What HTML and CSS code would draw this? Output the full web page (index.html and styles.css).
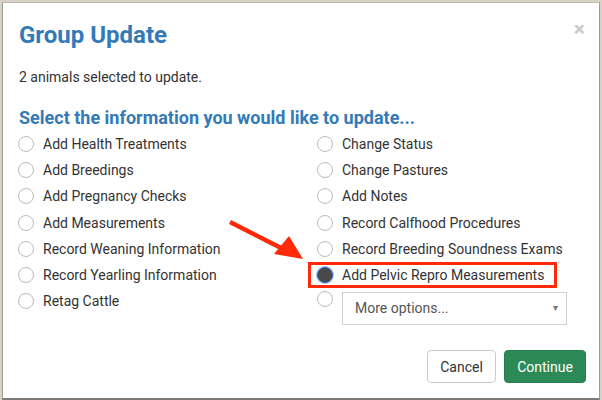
FILE: index.html
```html
<!DOCTYPE html>
<html>
<head>
<meta charset="utf-8">
<link rel="stylesheet" href="styles.css">
</head>
<body>
<div class="modal">
  <div class="modal-header">
    <h4 class="modal-title">Group Update</h4>
    <span class="close">×</span>
  </div>
  <p class="intro">2 animals selected to update.</p>
  <h5 class="section-title">Select the information you would like to update...</h5>
  <div class="options">
    <div class="col">
      <label class="opt"><span class="radio"></span>Add Health Treatments</label>
      <label class="opt"><span class="radio"></span>Add Breedings</label>
      <label class="opt"><span class="radio"></span>Add Pregnancy Checks</label>
      <label class="opt"><span class="radio"></span>Add Measurements</label>
      <label class="opt"><span class="radio"></span>Record Weaning Information</label>
      <label class="opt"><span class="radio"></span>Record Yearling Information</label>
      <label class="opt"><span class="radio"></span>Retag Cattle</label>
    </div>
    <div class="col">
      <label class="opt"><span class="radio"></span>Change Status</label>
      <label class="opt"><span class="radio"></span>Change Pastures</label>
      <label class="opt"><span class="radio"></span>Add Notes</label>
      <label class="opt"><span class="radio"></span>Record Calfhood Procedures</label>
      <label class="opt"><span class="radio"></span>Record Breeding Soundness Exams</label>
      <label class="opt selected"><span class="radio checked"></span>Add Pelvic Repro Measurements<span class="highlight"></span></label>
      <div class="opt opt-select"><span class="radio"></span>
        <div class="select"><span>More options...</span><span class="caret">▾</span></div>
      </div>
    </div>
  </div>
  <div class="modal-footer">
    <button class="btn btn-default">Cancel</button>
    <button class="btn btn-success">Continue</button>
  </div>
</div>
<svg class="arrow" width="602" height="400" viewBox="0 0 602 400">
  <line x1="230" y1="222" x2="285" y2="250" stroke="#ff2a0a" stroke-width="4.5" stroke-linecap="butt"/>
  <polygon points="274,254 289,236 303,259" fill="#ff2a0a"/>
</svg>
</body>
</html>
```
FILE: styles.css
```css
html, body {
  margin: 0;
  padding: 0;
}
body {
  width: 602px;
  height: 400px;
  box-sizing: border-box;
  padding: 2px 2px 0 2px;
  background: #d8d1c6;
  font-family: Roboto, "Liberation Sans", sans-serif;
  color: #333;
  position: relative;
  overflow: hidden;
}
.modal {
  box-sizing: border-box;
  height: 398px;
  background: #fff;
  border-top: 1px solid #bfb8ad;
  border-left: 1px solid #a19b92;
  border-right: 1px solid #a19b92;
  border-bottom: 2px solid #7e7974;
  display: flex;
  flex-direction: column;
}
.modal-header {
  display: flex;
  justify-content: space-between;
  align-items: flex-start;
  padding: 19px 14px 0 16px;
}
.modal-title {
  margin: 0;
  font-size: 24px;
  line-height: 26px;
  font-weight: 700;
  color: #337ab7;
}
.close {
  font-size: 21px;
  font-weight: 700;
  line-height: 16px;
  color: #c9c9c9;
  margin-top: -1px;
}
.intro {
  margin: 20px 0 0 16px;
  font-size: 14px;
  line-height: 18px;
}
.section-title {
  margin: 21px 0 0 16px;
  font-size: 18px;
  line-height: 22px;
  font-weight: 700;
  color: #337ab7;
}
.options {
  display: grid;
  grid-template-columns: 299px 1fr;
  margin: 2px 0 0 15px;
}
.opt {
  display: flex;
  align-items: center;
  gap: 9px;
  height: 26.17px;
  font-size: 14px;
  line-height: 26px;
  position: relative;
}
.radio {
  box-sizing: border-box;
  width: 16px;
  height: 16px;
  border-radius: 50%;
  border: 1px solid #bcbcbc;
  background: #fff;
  flex: none;
}
.radio.checked {
  background: #484848;
  border: 1px solid #2b62b8;
  box-shadow: 0 0 0 1px #a8c4e8;
}
.highlight {
  position: absolute;
  left: -9px;
  top: 0;
  width: 249px;
  height: 26px;
  box-sizing: border-box;
  border: 3px solid #ff2a0a;
}
.opt-select {
  align-items: flex-start;
  height: auto;
}
.opt-select .radio {
  margin-top: 3px;
}
.select {
  box-sizing: border-box;
  width: 225px;
  height: 33px;
  margin-top: 4px;
  border: 1px solid #cfcfcf;
  display: flex;
  align-items: center;
  justify-content: space-between;
  padding: 0 8px 0 12px;
  font-size: 14px;
  color: #555;
}
.caret {
  font-size: 10px;
  color: #777;
}
.modal-footer {
  margin-top: auto;
  display: flex;
  justify-content: flex-end;
  gap: 8px;
  padding: 0 13px 15px 0;
}
.btn {
  box-sizing: border-box;
  height: 33px;
  font-family: Roboto, "Liberation Sans", sans-serif;
  font-size: 14px;
  border-radius: 4px;
  padding: 0 12px;
}
.btn-default {
  width: 69px;
  background: #fff;
  border: 1px solid #cccccc;
  color: #333;
}
.btn-success {
  width: 82px;
  background: #2b8a56;
  border: 1px solid #277d4e;
  color: #fff;
}
.arrow {
  position: absolute;
  left: 0;
  top: 0;
  pointer-events: none;
}
```
